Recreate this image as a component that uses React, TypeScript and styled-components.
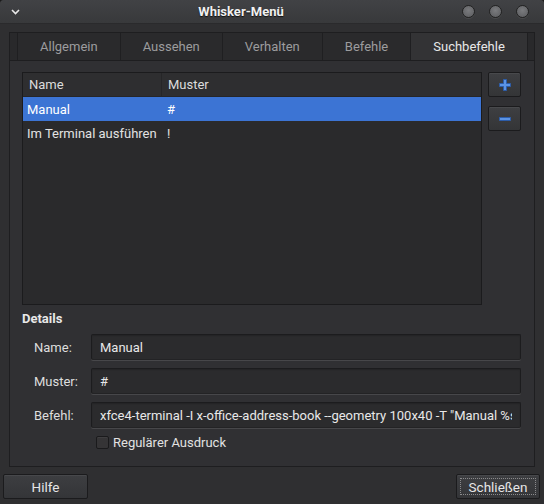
import React from "react";
import styled, { createGlobalStyle } from "styled-components";

const Global = createGlobalStyle`
  html, body { margin: 0; padding: 0; background: #1a1a1a; }
  body { font-family: Roboto, "Noto Sans", sans-serif; font-size: 13px; }
  * { box-sizing: border-box; }
`;

const Window = styled.div`
  width: 544px;
  height: 504px;
  display: flex;
  flex-direction: column;
  background: #2f2f31;
  border-radius: 4px 4px 0 0;
  overflow: hidden;
  color: #e4e4e4;
`;

const TitleBar = styled.div`
  height: 24px;
  flex: none;
  display: flex;
  align-items: center;
  background: linear-gradient(#414245, #38393b);
  border-bottom: 1px solid #2a2a2c;
  padding: 0 15px 0 11px;
`;

const Title = styled.div`
  flex: 1;
  text-align: center;
  font-weight: bold;
  font-size: 13px;
  color: #f0f0f0;
  text-shadow: 0 1px 1px #111;
`;

const Circles = styled.div`
  display: flex;
  gap: 14px;
`;

const Circle = styled.div`
  width: 13px;
  height: 13px;
  border-radius: 50%;
  background: radial-gradient(circle at 50% 40%, #7a7b7e, #5a5b5e);
  border: 1px solid #222;
  box-shadow: 0 1px 0 #4a4b4d;
`;

const Body = styled.div`
  display: flex;
  flex-direction: column;
  padding: 8px 9px 0 9px;
`;

const Notebook = styled.div`
  display: flex;
  flex-direction: column;
  height: 435px;
`;

const TabBar = styled.div`
  height: 28px;
  display: flex;
  background: #29292b;
  border: 1px solid #1e1e20;
  border-bottom: none;
  padding: 0 8px 0 7px;
`;

const Tab = styled.div<{ $active?: boolean }>`
  padding: 0 22px;
  display: flex;
  align-items: center;
  justify-content: center;
  color: ${(p) => (p.$active ? "#e8e8e8" : "#9c9c9e")};
  background: ${(p) => (p.$active ? "#333335" : "#2a2a2c")};
  border-left: 1px solid #1f1f21;
  ${(p) => (p.$active ? "border-right: 1px solid #1f1f21;" : "")}
  font-size: 13px;
`;

const Page = styled.div`
  flex: 1;
  background: #303033;
  border: 1px solid #1e1e20;
  padding: 11px 13px 0 12px;
  display: flex;
  flex-direction: column;
`;

const TopSection = styled.div`
  display: flex;
  gap: 6px;
  height: 233px;
`;

const List = styled.div`
  flex: 1;
  background: #2a2a2c;
  border: 1px solid #1b1b1d;
  display: flex;
  flex-direction: column;
`;

const ListHeader = styled.div`
  height: 24px;
  display: flex;
  background: #2e2e30;
  border-bottom: 1px solid #262628;
`;

const HeaderCell = styled.div<{ $w?: number }>`
  ${(p) => (p.$w ? `width: ${p.$w}px;` : "flex: 1;")}
  display: flex;
  align-items: center;
  padding-left: 6px;
  color: #dcdcdc;
  border-right: ${(p) => (p.$w ? "1px solid #262628" : "none")};
`;

const Row = styled.div<{ $selected?: boolean }>`
  height: 24px;
  display: flex;
  align-items: center;
  background: ${(p) => (p.$selected ? "#3c74d4" : "transparent")};
  color: ${(p) => (p.$selected ? "#ffffff" : "#e2e2e2")};
`;

const Cell = styled.div<{ $w?: number }>`
  ${(p) => (p.$w ? `width: ${p.$w}px;` : "flex: 1;")}
  padding-left: 4px;
  white-space: nowrap;
  overflow: hidden;
`;

const SideButtons = styled.div`
  display: flex;
  flex-direction: column;
  gap: 9px;
  width: 33px;
`;

const IconButton = styled.div`
  height: 25px;
  border: 1px solid #1b1b1d;
  border-radius: 2px;
  background: linear-gradient(#3e3f42, #343537);
  box-shadow: inset 0 1px 0 #48494c;
  display: flex;
  align-items: center;
  justify-content: center;
`;

const SectionTitle = styled.div`
  font-weight: bold;
  color: #e8e8e8;
  margin-top: 7px;
  height: 14px;
  line-height: 14px;
`;

const Form = styled.div`
  display: grid;
  grid-template-columns: 57px 1fr;
  row-gap: 8px;
  margin: 8px 0 0 12px;
  align-items: center;
`;

const Label = styled.div`
  color: #dedede;
`;

const Input = styled.input`
  height: 26px;
  width: 100%;
  background: #2b2b2d;
  border: 1px solid #1c1c1e;
  border-bottom-color: #232325;
  box-shadow: 0 1px 0 #47474a, inset 0 1px 1px #242426;
  border-radius: 2px;
  color: #e8e8e8;
  font-family: Roboto, "Noto Sans", sans-serif;
  font-size: 13px;
  padding: 0 8px;
  outline: none;
`;

const CheckRow = styled.label`
  grid-column: 2;
  display: flex;
  align-items: center;
  gap: 4px;
  margin: -1px 0 0 5px;
  color: #e2e2e2;
`;

const CheckBox = styled.span`
  width: 13px;
  height: 13px;
  border: 1px solid #1a1a1c;
  border-radius: 2px;
  background: #353436;
  box-shadow: inset 0 1px 0 #3f3e40;
`;

const ButtonRow = styled.div`
  display: flex;
  justify-content: space-between;
  padding: 0 4px 0 3px;
  margin-top: 7px;
`;

const Button = styled.div<{ $focus?: boolean }>`
  width: ${(p) => (p.$focus ? 84 : 85)}px;
  height: 25px;
  border: 1px solid #1b1b1d;
  border-radius: 2px;
  background: linear-gradient(#3d3e41, #343538);
  box-shadow: inset 0 1px 0 #47484b;
  display: flex;
  align-items: center;
  justify-content: center;
  color: #e6e6e6;
  font-size: 13.5px;
  position: relative;
  ${(p) =>
    p.$focus
      ? `&::after { content: ""; position: absolute; inset: 3px; border: 1px dotted #8a8a8c; }`
      : ""}
`;

const Chevron = () => (
  <svg width="9" height="6" viewBox="0 0 9 6">
    <path d="M1 1 L4.5 4.5 L8 1" stroke="#e8e8e8" strokeWidth="1.6" fill="none" />
  </svg>
);

const PlusIcon = () => (
  <svg width="14" height="14" viewBox="0 0 14 14">
    <path
      d="M5.5 1.5 H8.5 V5.5 H12.5 V8.5 H8.5 V12.5 H5.5 V8.5 H1.5 V5.5 H5.5 Z"
      fill="#5b93e4"
      stroke="#2c5ca8"
      strokeWidth="1"
    />
  </svg>
);

const MinusIcon = () => (
  <svg width="14" height="6" viewBox="0 0 14 6">
    <path d="M1.5 1.5 H12.5 V4.5 H1.5 Z" fill="#5b93e4" stroke="#2c5ca8" strokeWidth="1" />
  </svg>
);

export default function App() {
  return (
    <>
      <Global />
      <Window>
        <TitleBar>
          <Chevron />
          <Title>Whisker-Menü</Title>
          <Circles>
            <Circle />
            <Circle />
            <Circle />
          </Circles>
        </TitleBar>
        <Body>
          <Notebook>
            <TabBar>
              <Tab>Allgemein</Tab>
              <Tab>Aussehen</Tab>
              <Tab>Verhalten</Tab>
              <Tab>Befehle</Tab>
              <Tab $active>Suchbefehle</Tab>
            </TabBar>
            <Page>
              <TopSection>
                <List>
                  <ListHeader>
                    <HeaderCell $w={139}>Name</HeaderCell>
                    <HeaderCell>Muster</HeaderCell>
                  </ListHeader>
                  <Row $selected>
                    <Cell $w={140}>Manual</Cell>
                    <Cell>#</Cell>
                  </Row>
                  <Row>
                    <Cell $w={140}>Im Terminal ausführen</Cell>
                    <Cell>!</Cell>
                  </Row>
                </List>
                <SideButtons>
                  <IconButton>
                    <PlusIcon />
                  </IconButton>
                  <IconButton>
                    <MinusIcon />
                  </IconButton>
                </SideButtons>
              </TopSection>
              <SectionTitle>Details</SectionTitle>
              <Form>
                <Label>Name:</Label>
                <Input readOnly value="Manual" />
                <Label>Muster:</Label>
                <Input readOnly value="#" />
                <Label>Befehl:</Label>
                <Input
                  readOnly
                  value={'xfce4-terminal -I x-office-address-book --geometry 100x40 -T "Manual %s" -e "man %s"'}
                />
                <CheckRow>
                  <CheckBox />
                  Regulärer Ausdruck
                </CheckRow>
              </Form>
            </Page>
          </Notebook>
        </Body>
        <ButtonRow>
          <Button>Hilfe</Button>
          <Button $focus>Schließen</Button>
        </ButtonRow>
      </Window>
    </>
  );
}
